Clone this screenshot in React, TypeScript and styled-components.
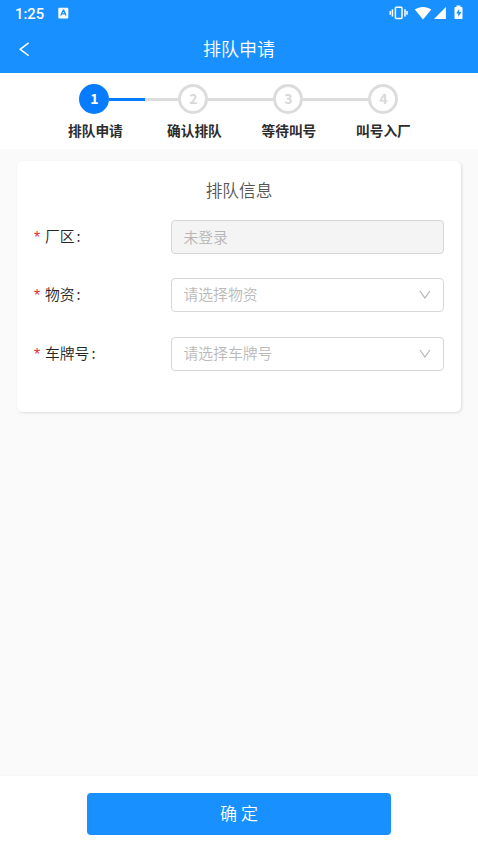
import React from "react";
import styled, { createGlobalStyle } from "styled-components";

const GlobalStyle = createGlobalStyle`
  * { box-sizing: border-box; }
  body {
    margin: 0;
    background: #fafafa;
    font-family: "Noto Sans CJK SC", "Noto Sans", sans-serif;
  }
`;

const Page = styled.div`
  display: flex;
  flex-direction: column;
  height: 100vh;
  background: #fafafa;
`;

const Header = styled.header`
  height: 73px;
  flex: none;
  background: #1890ff;
  color: #fff;
`;

const StatusBar = styled.div`
  display: flex;
  align-items: center;
  height: 26px;
  padding: 0 14px 0 15px;
`;

const Clock = styled.span`
  font: 500 14.8px/26px Roboto, sans-serif;
  width: 43px;
  padding-top: 1px;
`;

const StatusIcons = styled.div`
  display: flex;
  margin-left: auto;
`;

const NavBar = styled.div`
  display: grid;
  grid-template-columns: 48px 1fr 48px;
  align-items: center;
  height: 46px;
`;

const BackButton = styled.button`
  display: flex;
  padding: 0 0 0 18px;
  border: 0;
  background: none;
  color: inherit;
`;

const NavTitle = styled.h1`
  margin: 0;
  padding-bottom: 2px;
  font-size: 18px;
  line-height: 26px;
  font-weight: 350;
  text-align: center;
`;

const Steps = styled.section`
  flex: none;
  height: 76px;
  padding-top: 11px;
  background: #fff;
`;

const Track = styled.div`
  display: flex;
  align-items: center;
  padding-left: 79px;
`;

const StepCircle = styled.div<{ $active: boolean }>`
  flex: none;
  width: 30px;
  height: 30px;
  border: 3px solid ${(p) => (p.$active ? "#087cff" : "#dcdcdc")};
  border-radius: 50%;
  background: ${(p) => (p.$active ? "#087cff" : "#fff")};
  color: ${(p) => (p.$active ? "#fff" : "#d8d8d8")};
  font-size: 14px;
  font-weight: 700;
  line-height: 22px;
  padding-left: 1px;
  text-align: center;
`;

const Connector = styled.div<{ $width: number; $done: number }>`
  width: ${(p) => p.$width}px;
  height: 3px;
  background: linear-gradient(to right, #087cff ${(p) => p.$done}px, #dcdcdc ${(p) => p.$done}px);
`;

const StepLabels = styled.div`
  display: grid;
  grid-template-columns: 99px 94.5px 94.5px auto;
  padding: 6px 0 0 68px;
  color: #2c2c2c;
  font-size: 13.7px;
  line-height: 20px;
  font-weight: 700;
`;

const Card = styled.section`
  flex: none;
  height: 251px;
  margin: 12px 17px 0;
  padding: 17px 17px 0;
  border-radius: 6px;
  background: #fff;
  box-shadow: 1px 1px 3px rgba(0, 0, 0, 0.12);
`;

const CardTitle = styled.h2`
  margin: 0 0 17px;
  color: #555;
  font-size: 16.7px;
  line-height: 25px;
  font-weight: 350;
  text-align: center;
`;

const Field = styled.div`
  display: grid;
  grid-template-columns: 136.5px 1fr;
  align-items: center;
  height: 34px;
  margin-bottom: 24.4px;
  font-size: 14.8px;
  font-weight: 350;
`;

const Label = styled.label`
  display: flex;
  align-items: center;
  color: #262626;
  line-height: 22px;
  padding-bottom: 2px;
`;

const Required = styled.span`
  width: 11px;
  padding-top: 4px;
  color: #e0303a;
  font-family: "Liberation Sans", sans-serif;
  font-size: 16px;
  font-weight: 400;
`;

const Colon = styled.span`
  padding-left: 2px;
`;

const Control = styled.div<{ $disabled?: boolean }>`
  display: flex;
  align-items: center;
  justify-content: space-between;
  height: 34px;
  padding: 0 12px ${(p) => (p.$disabled ? "1px" : "3px")};
  border: 1px solid #d6d6d6;
  border-radius: 4px;
  background: ${(p) => (p.$disabled ? "#f4f4f4" : "#fff")};
  color: ${(p) => (p.$disabled ? "#b4b4b4" : "#bababa")};
`;

const ChevronSlot = styled.span`
  display: flex;
  padding-top: 2px;
`;

const Footer = styled.footer`
  display: flex;
  justify-content: center;
  height: 75px;
  margin-top: auto;
  padding-top: 17px;
  background: #fff;
  box-shadow: 0 -1px 2px rgba(0, 0, 0, 0.02);
`;

const SubmitButton = styled.button`
  width: 304px;
  height: 42px;
  padding: 0 0 3px;
  border: 0;
  border-radius: 4px;
  background: #1890ff;
  color: #fff;
  font: 350 17px "Noto Sans CJK SC", sans-serif;
`;

const steps = [
  { label: "排队申请", line: 69, done: 36 },
  { label: "确认排队", line: 65, done: 0 },
  { label: "等待叫号", line: 65, done: 0 },
  { label: "叫号入厂", line: 0, done: 0 },
];

const fields = [
  { label: "厂区", value: "未登录", disabled: true },
  { label: "物资", value: "请选择物资", disabled: false },
  { label: "车牌号", value: "请选择车牌号", disabled: false },
];

const InputMethodIcon = () => (
  <svg width="11" height="12" viewBox="0 0 11 12">
    <rect x="0.3" y="0.8" width="10" height="10.6" rx="1" fill="#fff" />
    <path d="M2.8 8.6 5.2 3.2h.5L8 8.6M3.8 6.8H7" fill="none" stroke="#1890ff" strokeWidth="1.3" />
  </svg>
);

const DeviceIcons = () => (
  <svg width="76" height="20" viewBox="0 0 76 20">
    <g fill="none" stroke="#fff" strokeWidth="1.5">
      <rect x="7.4" y="4.2" width="6.6" height="11.2" rx="0.8" />
      <path d="M4.4 6.3v7.2M2.2 8v3.8M17 6.3v7.2M19 8v3.8" />
    </g>
    <path d="M26.8 6.5c4.7-3.5 11.8-3.5 16.5 0L35 16.4Z" fill="#fff" />
    <path d="M46 16 57.9 4v12Z" fill="#fff" />
    <path d="M68.5 2.4h4V4h1.2q.8 0 .8.8v10.4q0 .8-.8.8h-6.4q-.8 0-.8-.8V4.8q0-.8.8-.8h1.2Z" fill="#fff" />
    <path d="m71.2 5.8-3 4.8h2v3.5l3.2-5h-2.2Z" fill="#1890ff" />
  </svg>
);

const Chevron = () => (
  <svg width="12" height="9" viewBox="0 0 12 9" fill="none" stroke="#b4b4b4" strokeWidth="1.2">
    <path d="m.9 1 5 7 5-7" />
  </svg>
);

export default function App() {
  return (
    <>
      <GlobalStyle />
      <Page>
        <Header>
          <StatusBar>
            <Clock>1:25</Clock>
            <InputMethodIcon />
            <StatusIcons>
              <DeviceIcons />
            </StatusIcons>
          </StatusBar>
          <NavBar>
            <BackButton aria-label="返回">
              <svg width="12" height="15" viewBox="0 0 12 15" fill="none" stroke="#fff" strokeWidth="1.5">
                <path d="M10.6 0.9 2.2 7.3l8.4 6.3" />
              </svg>
            </BackButton>
            <NavTitle>排队申请</NavTitle>
          </NavBar>
        </Header>
        <Steps>
          <Track>
            {steps.map((step, i) => (
              <React.Fragment key={step.label}>
                <StepCircle $active={i === 0}>{i + 1}</StepCircle>
                {step.line > 0 && <Connector $width={step.line} $done={step.done} />}
              </React.Fragment>
            ))}
          </Track>
          <StepLabels>
            {steps.map((step) => (
              <span key={step.label}>{step.label}</span>
            ))}
          </StepLabels>
        </Steps>
        <Card>
          <CardTitle>排队信息</CardTitle>
          {fields.map((field) => (
            <Field key={field.label}>
              <Label>
                <Required>*</Required>
                {field.label}
                <Colon>:</Colon>
              </Label>
              <Control $disabled={field.disabled}>
                {field.value}
                {!field.disabled && (
                  <ChevronSlot>
                    <Chevron />
                  </ChevronSlot>
                )}
              </Control>
            </Field>
          ))}
        </Card>
        <Footer>
          <SubmitButton>确 定</SubmitButton>
        </Footer>
      </Page>
    </>
  );
}
